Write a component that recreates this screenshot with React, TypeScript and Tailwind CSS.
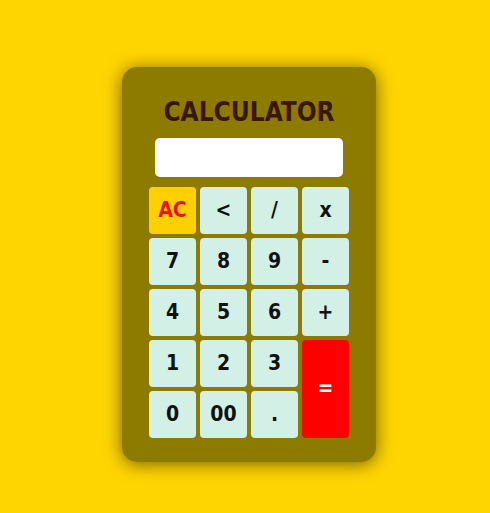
import React from "react";

const keys: { label: string; cls?: string }[] = [
  { label: "AC", cls: "bg-[#ffd000] text-[#e8141a]" },
  { label: "<" },
  { label: "/" },
  { label: "x" },
  { label: "7" },
  { label: "8" },
  { label: "9" },
  { label: "-" },
  { label: "4" },
  { label: "5" },
  { label: "6" },
  { label: "+" },
  { label: "1" },
  { label: "2" },
  { label: "3" },
  { label: "=", cls: "bg-[#ff0000] text-white row-span-2" },
  { label: "0" },
  { label: "00" },
  { label: "." },
];

export default function App() {
  return (
    <div className="w-[490px] h-[513px] bg-[#ffd500] overflow-hidden pl-[122px] pt-[67px]">
      <div
        className="w-[254px] h-[395px] bg-[#8d7b00] rounded-[15px] shadow-[0_2px_18px_rgba(0,0,0,0.55)] flex flex-col items-center pt-[30px]"
        style={{ fontFamily: '"DejaVu Sans Condensed", "DejaVu Sans", sans-serif' }}
      >
        <div className="text-[26px] leading-[30px] font-bold text-[#3a1606]">
          CALCULATOR
        </div>
        <div className="mt-[11px] w-[188px] h-[39px] bg-white rounded-[5px]" />
        <div className="mt-[10px] grid grid-cols-[repeat(4,47px)] grid-rows-[repeat(5,47px)] gap-[4px]">
          {keys.map((k) => (
            <button
              key={k.label}
              className={`rounded-[4px] flex items-center justify-center text-[21px] font-bold ${
                k.cls ?? "bg-[#d3f0e6] text-[#111]"
              }`}
            >
              {k.label}
            </button>
          ))}
        </div>
      </div>
    </div>
  );
}
